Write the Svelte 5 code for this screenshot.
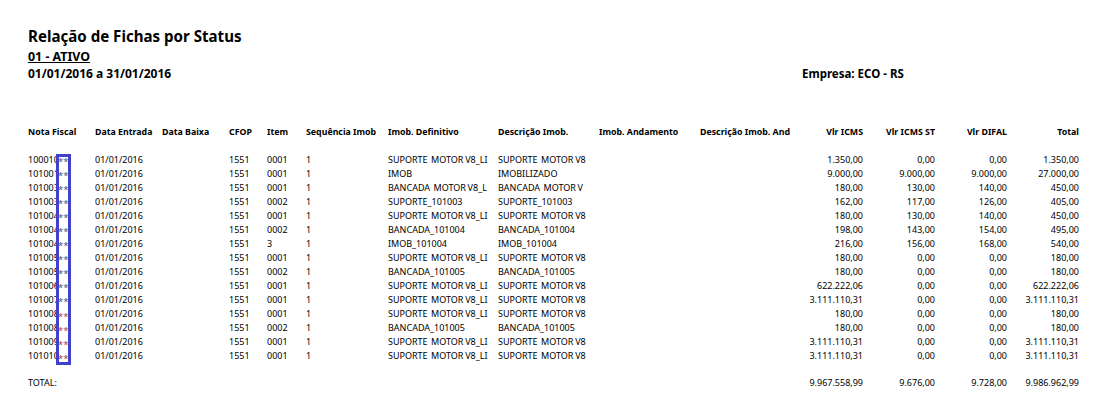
<script>
  const S = 'SUPORTE  MOTOR V8_LI', D = 'SUPORTE  MOTOR V8';
  const B = 'BANCADA_101005';
  const big = '3.111.110,31';
  const rows = [
    ['100010','0001',S,D,'1.350,00','0,00','0,00','1.350,00','b'],
    ['101001','0001','IMOB','IMOBILIZADO','9.000,00','9.000,00','9.000,00','27.000,00','b'],
    ['101003','0001','BANCADA  MOTOR V8_L','BANCADA  MOTOR V','180,00','130,00','140,00','450,00','b'],
    ['101003','0002','SUPORTE_101003','SUPORTE_101003','162,00','117,00','126,00','405,00','b'],
    ['101004','0001',S,D,'180,00','130,00','140,00','450,00','b'],
    ['101004','0002','BANCADA_101004','BANCADA_101004','198,00','143,00','154,00','495,00','b'],
    ['101004','3','IMOB_101004','IMOB_101004','216,00','156,00','168,00','540,00','b'],
    ['101005','0001',S,D,'180,00','0,00','0,00','180,00','b'],
    ['101005','0002',B,B,'180,00','0,00','0,00','180,00','b'],
    ['101006','0001',S,D,'622.222,06','0,00','0,00','622.222,06','b'],
    ['101007','0001',S,D,big,'0,00','0,00',big,'b'],
    ['101008','0001',S,D,'180,00','0,00','0,00','180,00','r'],
    ['101008','0002',B,B,'180,00','0,00','0,00','180,00','r'],
    ['101009','0001',S,D,big,'0,00','0,00',big,'r'],
    ['101010','0001',S,D,big,'0,00','0,00',big,'r'],
  ];
</script>

<div class="page">
  <h1>Relação de Fichas por Status</h1>
  <div class="status">01 - ATIVO</div>
  <div class="period">
    <span class="dates">01/01/2016 a 31/01/2016</span>
    <span>Empresa: ECO - RS</span>
  </div>

  <div class="grid head">
    <span>Nota Fiscal</span><span>Data Entrada</span><span>Data Baixa</span><span>CFOP</span><span>Item</span>
    <span>Sequência Imob</span><span>Imob. Definitivo</span><span>Descrição Imob.</span><span>Imob. Andamento</span><span>Descrição Imob. And</span>
    <span class="n">Vlr ICMS</span><span class="n">Vlr ICMS ST</span><span class="n">Vlr DIFAL</span><span class="n">Total</span>
  </div>

  <div class="body">
    {#each rows as r}
      <div class="grid row">
        <span class="nf"><span class="num">{r[0]}</span><span class={r[8] === 'r' ? 'ast red' : 'ast blue'}>**</span></span>
        <span>01/01/2016</span><span></span><span>1551</span><span>{r[1]}</span><span>1</span>
        <span class="txt">{r[2]}</span><span class="txt">{r[3]}</span><span></span><span></span>
        <span class="n">{r[4]}</span><span class="n">{r[5]}</span><span class="n">{r[6]}</span><span class="n">{r[7]}</span>
      </div>
    {/each}
    <div class="box"></div>
  </div>

  <div class="grid row total">
    <span>TOTAL:</span><span></span><span></span><span></span><span></span><span></span><span></span><span></span><span></span><span></span>
    <span class="n">9.967.558,99</span><span class="n">9.676,00</span><span class="n">9.728,00</span><span class="n">9.986.962,99</span>
  </div>
</div>

<style>
  :global(body) { margin: 0; background: #fff; }
  .page {
    width: 1095px; height: 409px; box-sizing: border-box; overflow: hidden;
    padding: 27px 0 0 28px;
    font-family: "Noto Sans", sans-serif; color: #000;
  }
  h1 { margin: 0; font-size: 15.1px; line-height: 19px; font-weight: 700; color: #000; }
  .status { margin-top: 3px; font-size: 12.4px; line-height: 15px; font-weight: 700; text-decoration: underline; color: #000; }
  .period { display: flex; margin-top: 2px; font-size: 11.5px; line-height: 15px; font-weight: 700; color: #000; }
  .dates { width: 774px; font-size: 12px; }
  .grid {
    display: grid;
    grid-template-columns: 67px 67px 67px 38px 39px 82px 110px 101px 101px 71px 92px 72px 72px 72px;
    width: 1051px; white-space: nowrap;
  }
  .grid > span { overflow: hidden; white-space: pre; min-width: 0; }
  .head { margin-top: 44px; font-size: 8.8px; line-height: 14px; font-weight: 700; color: #000; }
  .head > span { overflow: visible; }
  .body { position: relative; margin-top: 14px; }
  .row { font-size: 9px; line-height: 14px; }
  .n { text-align: right; }
  .txt { word-spacing: -0.6px; }
  .grid > .nf { display: flex; overflow: visible; }
  .num { width: 30px; flex: none; }
  .ast { font-size: 9.5px; transform: translateY(2px); }
  .blue { color: #3f4f78; }
  .red { color: #a83a3a; transform: translateY(3px); }
  .box {
    position: absolute; left: 28px; top: 1px; width: 9px; height: 205px;
    border: 3px solid #4141cc;
  }
  .total { margin-top: 13px; }
</style>
